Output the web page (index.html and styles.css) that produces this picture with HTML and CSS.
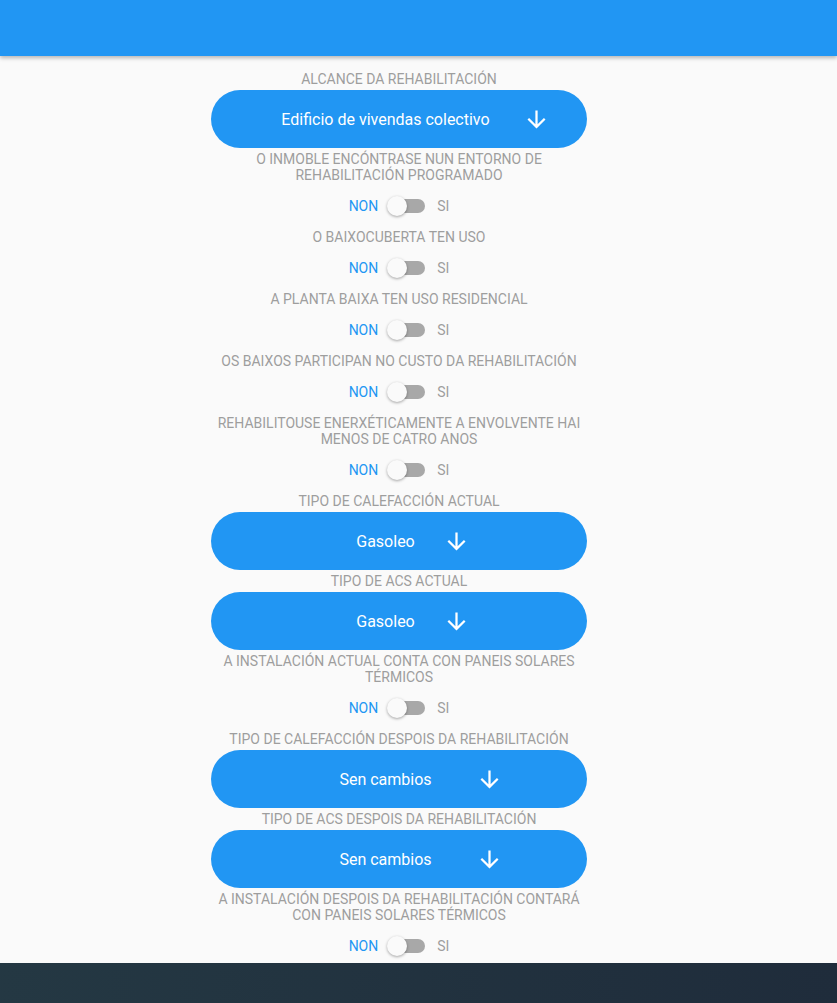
FILE: index.html
```html
<!DOCTYPE html>
<html lang="gl">
<head>
    <meta charset="UTF-8">
    <meta name="viewport" content="width=device-width, initial-scale=1.0">
    <title>Rehabilitación</title>
    <link rel="stylesheet" href="styles.css">
</head>
<body>
    <header class="app-bar"></header>

    <div class="content">
        <div class="form">
            <div class="label">Alcance da rehabilitación</div>
            <button class="select">
                <span class="select-row">
                    <span class="select-value w-scope">Edificio de vivendas colectivo</span>
                    <svg class="arrow" viewBox="0 0 24 24"><path d="M20 12l-1.41-1.41L13 16.17V4h-2v12.17l-5.58-5.59L4 12l8 8 8-8z"/></svg>
                </span>
            </button>

            <div class="label">O inmoble encóntrase nun entorno de rehabilitación programado</div>
            <div class="toggle-row">
                <span class="opt opt-active">Non</span>
                <span class="switch"><span class="track"></span><span class="thumb"></span></span>
                <span class="opt">Si</span>
            </div>

            <div class="label">O baixocuberta ten uso</div>
            <div class="toggle-row">
                <span class="opt opt-active">Non</span>
                <span class="switch"><span class="track"></span><span class="thumb"></span></span>
                <span class="opt">Si</span>
            </div>

            <div class="label">A planta baixa ten uso residencial</div>
            <div class="toggle-row">
                <span class="opt opt-active">Non</span>
                <span class="switch"><span class="track"></span><span class="thumb"></span></span>
                <span class="opt">Si</span>
            </div>

            <div class="label">Os baixos participan no custo da rehabilitación</div>
            <div class="toggle-row">
                <span class="opt opt-active">Non</span>
                <span class="switch"><span class="track"></span><span class="thumb"></span></span>
                <span class="opt">Si</span>
            </div>

            <div class="label">Rehabilitouse enerxéticamente a envolvente hai menos de catro anos</div>
            <div class="toggle-row">
                <span class="opt opt-active">Non</span>
                <span class="switch"><span class="track"></span><span class="thumb"></span></span>
                <span class="opt">Si</span>
            </div>

            <div class="label">Tipo de calefacción actual</div>
            <button class="select">
                <span class="select-row">
                    <span class="select-value w-fuel">Gasoleo</span>
                    <svg class="arrow" viewBox="0 0 24 24"><path d="M20 12l-1.41-1.41L13 16.17V4h-2v12.17l-5.58-5.59L4 12l8 8 8-8z"/></svg>
                </span>
            </button>

            <div class="label">Tipo de ACS actual</div>
            <button class="select">
                <span class="select-row">
                    <span class="select-value w-fuel">Gasoleo</span>
                    <svg class="arrow" viewBox="0 0 24 24"><path d="M20 12l-1.41-1.41L13 16.17V4h-2v12.17l-5.58-5.59L4 12l8 8 8-8z"/></svg>
                </span>
            </button>

            <div class="label">A instalación actual conta con paneis solares térmicos</div>
            <div class="toggle-row">
                <span class="opt opt-active">Non</span>
                <span class="switch"><span class="track"></span><span class="thumb"></span></span>
                <span class="opt">Si</span>
            </div>

            <div class="label">Tipo de calefacción despois da rehabilitación</div>
            <button class="select">
                <span class="select-row">
                    <span class="select-value w-change">Sen cambios</span>
                    <svg class="arrow" viewBox="0 0 24 24"><path d="M20 12l-1.41-1.41L13 16.17V4h-2v12.17l-5.58-5.59L4 12l8 8 8-8z"/></svg>
                </span>
            </button>

            <div class="label">Tipo de ACS despois da rehabilitación</div>
            <button class="select">
                <span class="select-row">
                    <span class="select-value w-change">Sen cambios</span>
                    <svg class="arrow" viewBox="0 0 24 24"><path d="M20 12l-1.41-1.41L13 16.17V4h-2v12.17l-5.58-5.59L4 12l8 8 8-8z"/></svg>
                </span>
            </button>

            <div class="label">A instalación despois da rehabilitación contará con paneis solares térmicos</div>
            <div class="toggle-row">
                <span class="opt opt-active">Non</span>
                <span class="switch"><span class="track"></span><span class="thumb"></span></span>
                <span class="opt">Si</span>
            </div>
        </div>
    </div>

    <footer class="bottom-bar"></footer>
</body>
</html>
```

FILE: styles.css
```css
* {
    margin: 0;
    padding: 0;
    box-sizing: border-box;
}

body {
    background-color: #fafafa;
    font-family: Roboto, 'Liberation Sans', sans-serif;
    overflow: hidden;
}

.app-bar {
    height: 56px;
    background-color: #2196f3;
    box-shadow: 0 2px 4px rgba(0, 0, 0, 0.28);
    position: relative;
    z-index: 2;
}

.content {
    width: 798px;
    padding-top: 14px;
}

.form {
    width: 376px;
    margin: 0 auto;
    display: flex;
    flex-direction: column;
}

.label {
    padding-top: 1px;
    font-size: 14px;
    line-height: 16px;
    color: #9e9e9e;
    text-transform: uppercase;
    text-align: center;
}

.select {
    height: 58px;
    margin: 3px 0 2px;
    border: none;
    border-radius: 29px;
    background-color: #2196f3;
    color: #fff;
    font-family: inherit;
    font-size: 16px;
    font-weight: 400;
    display: flex;
    align-items: center;
    justify-content: center;
}

.select-row {
    display: flex;
    align-items: center;
}

.select-value {
    text-align: center;
    white-space: nowrap;
}

.w-scope {
    width: 275px;
}

.w-fuel {
    width: 115px;
}

.w-change {
    width: 181px;
}

.arrow {
    width: 27px;
    height: 27px;
    fill: #fff;
}

.toggle-row {
    height: 45px;
    display: flex;
    align-items: center;
    justify-content: center;
    font-size: 14px;
}

.opt {
    color: #9e9e9e;
    text-transform: uppercase;
}

.opt-active {
    color: #2196f3;
}

.switch {
    position: relative;
    width: 38px;
    height: 20px;
    margin: 0 12px 0 9px;
}

.track {
    position: absolute;
    left: 2px;
    right: 0;
    top: 3px;
    height: 14px;
    border-radius: 7px;
    background-color: #a8a8a8;
}

.thumb {
    position: absolute;
    left: 0;
    top: 0;
    width: 20px;
    height: 20px;
    border-radius: 50%;
    background-color: #fafafa;
    box-shadow: 0 1px 3px rgba(0, 0, 0, 0.35);
}

.bottom-bar {
    position: fixed;
    left: 0;
    right: 0;
    bottom: 0;
    height: 40px;
    background: linear-gradient(90deg, #243843, #1f2c3b);
    z-index: 3;
}
```
